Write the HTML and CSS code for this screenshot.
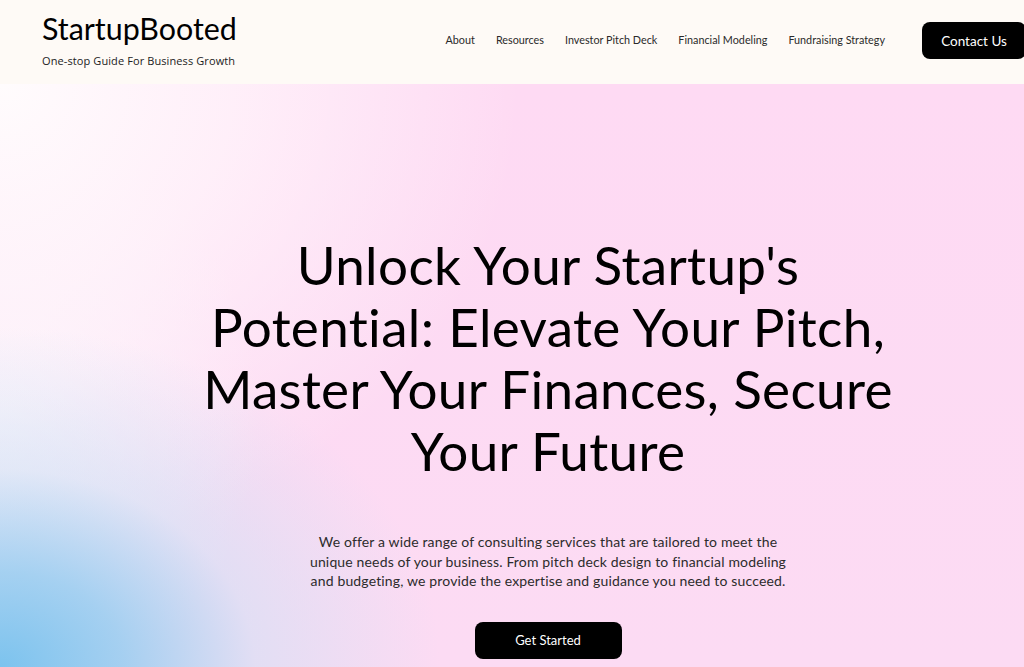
FILE: index.html
```html
<!DOCTYPE html>
<html lang="en">
<head>
<meta charset="utf-8">
<title>StartupBooted</title>
<link rel="stylesheet" href="styles.css">
</head>
<body>
<header class="site-header">
  <div class="brand">
    <div class="logo">StartupBooted</div>
    <div class="tagline">One-stop Guide For Business Growth</div>
  </div>
  <nav class="nav">
    <a href="#">About</a>
    <a href="#">Resources</a>
    <a href="#">Investor Pitch Deck</a>
    <a href="#">Financial Modeling</a>
    <a href="#">Fundraising Strategy</a>
  </nav>
  <a class="btn btn-contact" href="#">Contact Us</a>
</header>
<main class="hero">
  <div class="hero-inner">
    <h1 class="hero-title">Unlock Your Startup's Potential: Elevate Your Pitch, Master Your Finances, Secure Your Future</h1>
    <p class="hero-text">We offer a wide range of consulting services that are tailored to meet the<br>unique needs of your business. From pitch deck design to financial modeling<br>and budgeting, we provide the expertise and guidance you need to succeed.</p>
    <a class="btn btn-start" href="#">Get Started</a>
  </div>
</main>
</body>
</html>
```

FILE: styles.css
```css
* { box-sizing: border-box; }
html, body { margin: 0; padding: 0; }
body {
  font-family: "Lato", "Liberation Sans", sans-serif;
  color: #000;
  height: 667px;
  overflow: hidden;
}
a { text-decoration: none; }

.site-header {
  height: 84px;
  background: #fefaf6;
  display: flex;
  align-items: center;
  padding: 0 0 0 42px;
}
.brand {
  display: flex;
  flex-direction: column;
  margin-top: -6px;
}
.logo {
  font-family: "Lato", sans-serif;
  font-size: 30.4px;
  line-height: 36px;
  color: #000;
}
.tagline {
  font-family: "Open Sans", sans-serif;
  font-size: 11px;
  color: #222;
  margin-top: 7px;
  letter-spacing: 0.1px;
}
.nav {
  margin-left: auto;
  display: flex;
  gap: 21px;
  margin-right: 37px;
  margin-top: -5px;
}
.nav a {
  font-size: 10.8px;
  color: #2a2a2a;
}
.btn {
  display: flex;
  align-items: center;
  justify-content: center;
  background: #000;
  color: #fff;
  border-radius: 8px;
}
.btn-contact {
  width: 104px;
  height: 37px;
  font-size: 13.5px;
  margin-right: -2px;
  margin-top: -3px;
}

.hero {
  height: 583px;
  background:
    radial-gradient(ellipse 440px 340px at 0% 100%, rgba(124,195,238,1) 0%, rgba(150,205,240,0.85) 28%, rgba(205,225,245,0.55) 58%, rgba(235,230,248,0) 100%),
    radial-gradient(ellipse 520px 470px at 0px 0px, rgba(255,252,253,1) 0%, rgba(255,246,251,0.75) 45%, rgba(255,240,250,0) 100%),
    radial-gradient(ellipse 260px 300px at 0px 330px, rgba(250,246,252,0.9) 0%, rgba(250,244,252,0) 100%),
    linear-gradient(180deg, #fedaf3 0%, #fcdbf3 100%);
  padding-left: 72px;
}
.hero-inner {
  display: flex;
  flex-direction: column;
  align-items: center;
  padding-top: 150px;
}
.hero-title {
  margin: 0;
  font-weight: 400;
  font-size: 53px;
  letter-spacing: 0.35px;
  line-height: 62px;
  text-align: center;
  width: 710px;
  color: #000;
}
.hero-text {
  margin: 50px 0 0;
  width: 520px;
  text-align: center;
  font-size: 14px;
  letter-spacing: 0.15px;
  line-height: 19.5px;
  color: #2c2c2c;
}
.btn-start {
  margin-top: 31px;
  width: 147px;
  height: 37px;
  font-size: 13px;
}
```
